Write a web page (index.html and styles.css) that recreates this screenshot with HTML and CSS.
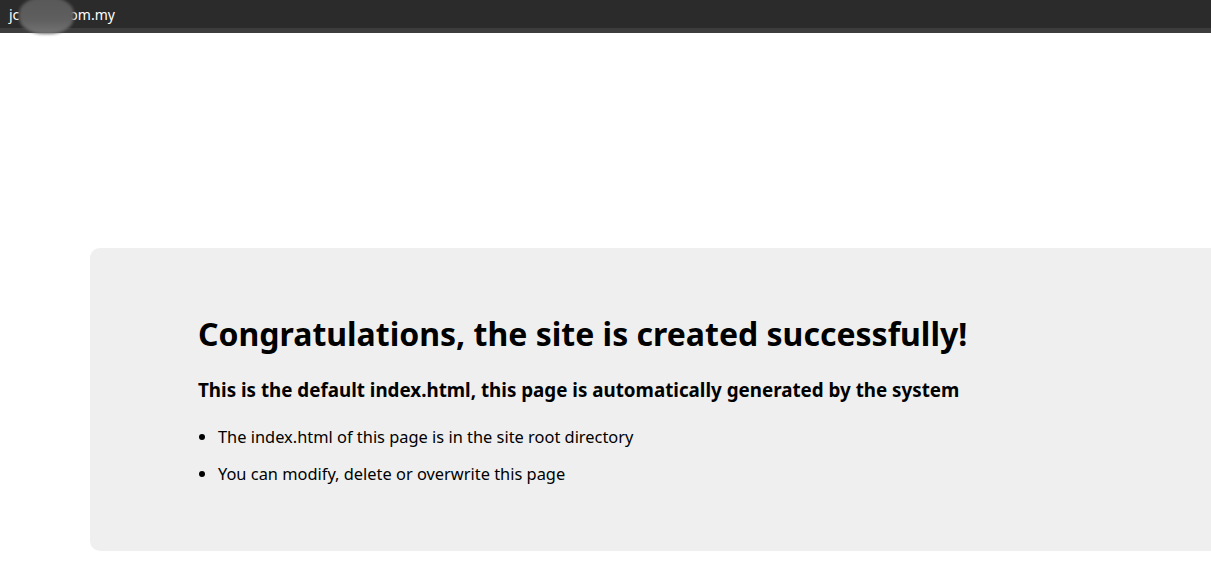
FILE: index.html
```html
<!DOCTYPE html>
<html>
<head>
<meta charset="utf-8">
<title>Site created</title>
<link rel="stylesheet" href="styles.css">
</head>
<body>
<div class="tabbar">
  <div class="tab-title"><span>jc</span><span class="gap"></span><span>om.my</span></div>
  <span class="blur"></span>
</div>
<div class="page">
  <div class="panel">
    <h1>Congratulations, the site is created successfully!</h1>
    <h3>This is the default index.html, this page is automatically generated by the system</h3>
    <ul>
      <li>The index.html of this page is in the site root directory</li>
      <li>You can modify, delete or overwrite this page</li>
    </ul>
  </div>
</div>
</body>
</html>
```
FILE: styles.css
```css
html, body {
  margin: 0;
  padding: 0;
  background: #ffffff;
  overflow: hidden;
}
body {
  font-family: "Noto Sans", "Open Sans", sans-serif;
  color: #000;
  width: 1211px;
  height: 580px;
}
.tabbar {
  position: relative;
  height: 28px;
  background: #2b2b2b;
  border-bottom: 5px solid #3d3d3d;
  display: flex;
  align-items: center;
  padding-left: 9px;
}
.tab-title {
  display: flex;
  align-items: center;
  color: #ffffff;
  font-size: 14px;
  font-family: "Noto Sans", sans-serif;
}
.gap {
  display: inline-block;
  width: 50px;
}
.blur {
  position: absolute;
  left: 19px;
  top: -3px;
  width: 55px;
  height: 37px;
  border-radius: 45%;
  background: linear-gradient(#585858 0%, #5e5e5e 60%, #747474 100%);
  filter: blur(1.5px);
}
.page {
  padding: 215px 0 0 90px;
}
.panel {
  background: #efefef;
  border-radius: 10px 0 0 10px;
  height: 303px;
  box-sizing: border-box;
  padding: 60px 0 0 108px;
}
h1 {
  margin: 0;
  font-size: 32px;
  font-weight: 700;
  line-height: 52px;
}
h3 {
  margin: 17px 0 0;
  font-size: 18.8px;
  font-weight: 700;
  line-height: 26px;
}
ul {
  margin: 22px 0 0;
  padding-left: 20px;
}
li {
  font-size: 16.4px;
  line-height: 24px;
  margin-bottom: 13px;
}
```
